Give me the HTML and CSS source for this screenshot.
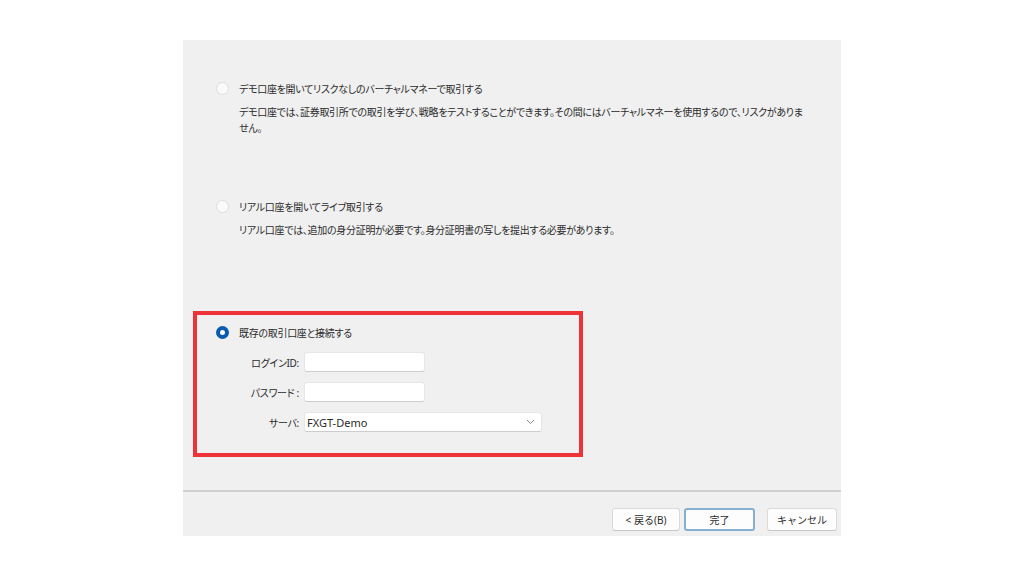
FILE: index.html
```html
<!DOCTYPE html>
<html>
<head>
    <meta charset="UTF-8">
    <title>口座の選択</title>
    <link rel="stylesheet" href="styles.css">
</head>
<body>
    <div class="dialog">
        <div class="content">
            <div class="option">
                <div class="option-title"><span class="radio"></span><span>デモ口座を開いてリスクなしのバーチャルマネーで取引する</span></div>
                <p class="option-desc">デモ口座では、証券取引所での取引を学び、戦略をテストすることができます。その間にはバーチャルマネーを使用するので、リスクがありません。</p>
            </div>
            <div class="option option-real">
                <div class="option-title"><span class="radio"></span><span>リアル口座を開いてライブ取引する</span></div>
                <p class="option-desc">リアル口座では、追加の身分証明が必要です。身分証明書の写しを提出する必要があります。</p>
            </div>
            <div class="highlight">
                <div class="option-title"><span class="radio checked"></span><span>既存の取引口座と接続する</span></div>
                <div class="login-form">
                    <label>ログインID:</label>
                    <div class="field"></div>
                    <label>パスワード :</label>
                    <div class="field"></div>
                    <label>サーバ:</label>
                    <div class="select">
                        <span>FXGT-Demo</span>
                        <svg width="9" height="6" viewBox="0 0 9 6"><path d="M1 1l3.5 3.5L8 1" fill="none" stroke="#8a8a8a" stroke-width="1"/></svg>
                    </div>
                </div>
            </div>
        </div>
        <div class="footer">
            <button class="btn btn-back">&lt; 戻る(B)</button>
            <button class="btn btn-default">完了</button>
            <button class="btn btn-cancel">キャンセル</button>
        </div>
    </div>
</body>
</html>
```

FILE: styles.css
```css
body {
    margin: 0;
    background: #fff;
    font-family: "Noto Sans", "Noto Sans CJK JP", sans-serif;
    font-feature-settings: "palt";
    color: #2b2b2b;
}

.dialog {
    width: 658px;
    height: 496px;
    margin: 40px 0 0 183px;
    background: #f0f0f0;
    display: flex;
    flex-direction: column;
}

.content {
    height: 450px;
    padding: 40px 0 0 33px;
    box-sizing: border-box;
}

.option-title {
    display: flex;
    align-items: center;
    gap: 10px;
    height: 16px;
    font-size: 10px;
    letter-spacing: -0.3px;
}

.option-desc {
    margin: 8px 0 0 23px;
    width: 570px;
    font-size: 10px;
    letter-spacing: -0.3px;
    line-height: 16px;
}

.option-real {
    margin-top: 62px;
}

.radio {
    width: 13px;
    height: 13px;
    border-radius: 50%;
    background: #fafafa;
    border: 1px solid #dcdcdc;
    box-sizing: border-box;
    flex-shrink: 0;
}

.radio.checked {
    background: #fff;
    border: 4px solid #0b5cad;
}

.highlight {
    margin: 73px 0 0 -23px;
    width: 390px;
    border: 4px solid #ee3338;
    padding: 9px 0 21px 19px;
    box-sizing: border-box;
}

.login-form {
    display: grid;
    grid-template-columns: 60px auto;
    column-gap: 5px;
    row-gap: 10px;
    margin: 12px 0 0 23px;
}

.login-form label {
    text-align: right;
    align-self: center;
    font-size: 10px;
    letter-spacing: -0.3px;
}

.field,
.select {
    height: 20px;
    background: #fff;
    border: 1px solid #e6e6e6;
    border-bottom-color: #cdcdcd;
    border-radius: 3px;
    box-sizing: border-box;
}

.field {
    width: 121px;
}

.select {
    width: 238px;
    display: flex;
    justify-content: space-between;
    align-items: center;
    padding: 0 6px 0 2px;
    font-size: 11px;
}

.footer {
    flex: 1;
    border-top: 2px solid #cfcfcf;
    display: flex;
    justify-content: flex-end;
    align-items: flex-start;
    padding: 16px 4px 0 0;
}

.btn {
    height: 23px;
    background: #fdfdfd;
    border: 1px solid #dadada;
    border-bottom-color: #c6c6c6;
    border-radius: 3px;
    font-family: inherit;
    font-size: 10px;
    color: #2b2b2b;
    padding: 0;
}

.btn-back {
    width: 68px;
}

.btn-default {
    width: 71px;
    margin-left: 4px;
    border: 2px solid #86b0d2;
}

.btn-cancel {
    width: 70px;
    margin-left: 12px;
}
```
